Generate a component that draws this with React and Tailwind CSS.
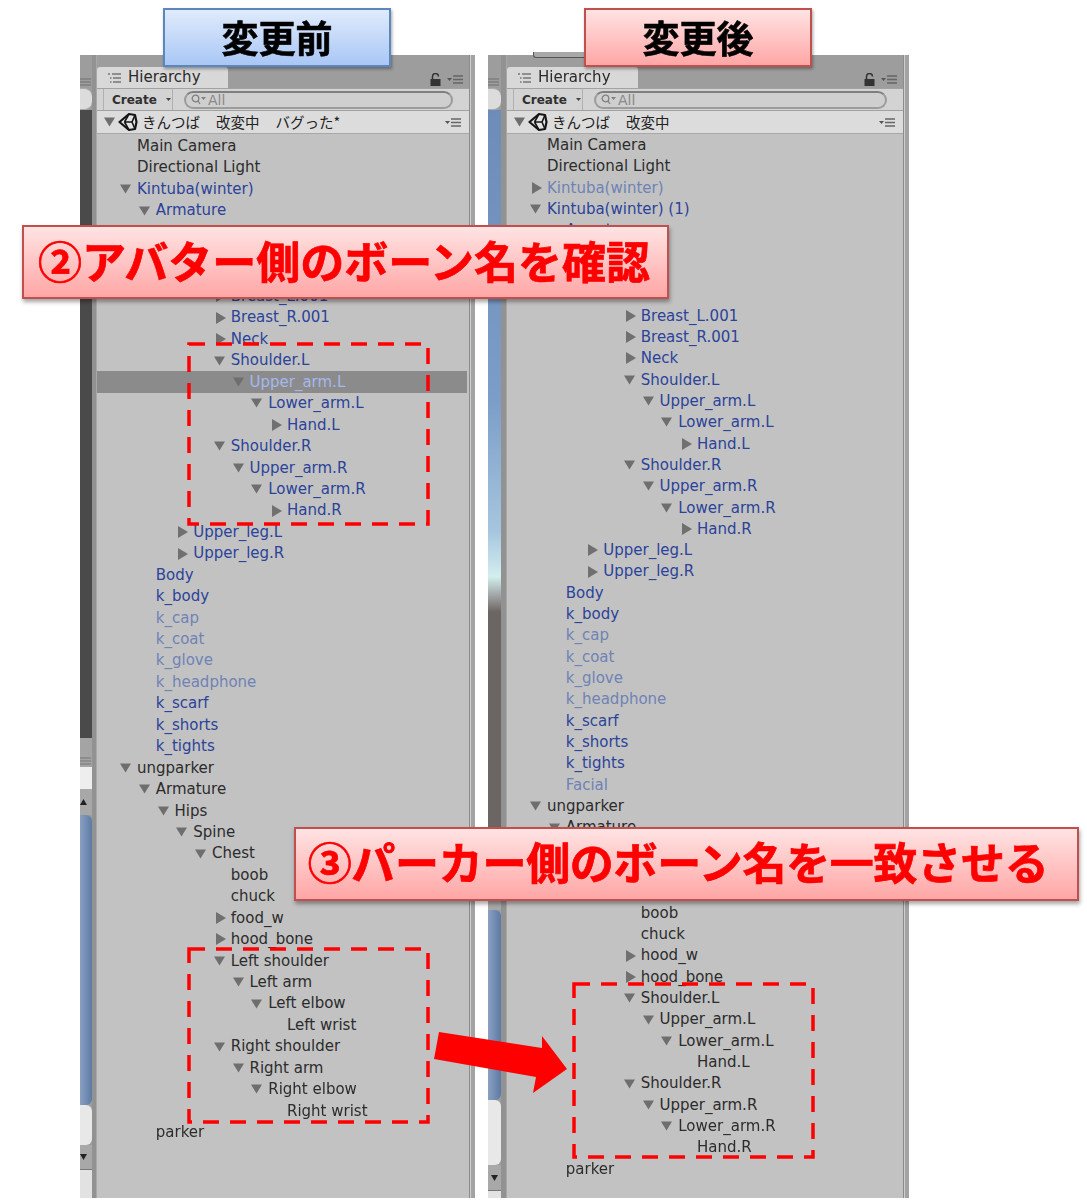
import React from "react";

const shoulders = (names) =>
  names.map((n, i) => {
    const level = 5 + (i % 4);
    return { t: n.t, l: level, a: n.a, c: n.c };
  });

const armsBlue = ["Shoulder.L", "Upper_arm.L", "Lower_arm.L", "Hand.L", "Shoulder.R", "Upper_arm.R", "Lower_arm.R", "Hand.R"];
const leftBones = ["Left shoulder", "Left arm", "Left elbow", "Left wrist", "Right shoulder", "Right arm", "Right elbow", "Right wrist"];

const kintubaBody = [
  { t: "Hips", l: 2, a: "d", c: "b" },
  { t: "Spine", l: 3, a: "d", c: "b" },
  { t: "Chest", l: 4, a: "d", c: "b" },
  { t: "Breast_L.001", l: 5, a: "r", c: "b" },
  { t: "Breast_R.001", l: 5, a: "r", c: "b" },
  { t: "Neck", l: 5, a: "r", c: "b" },
  ...shoulders(armsBlue.map((t, i) => ({ t, a: i % 4 === 3 ? "r" : "d", c: "b" }))),
  { t: "Upper_leg.L", l: 3, a: "r", c: "b" },
  { t: "Upper_leg.R", l: 3, a: "r", c: "b" },
  { t: "Body", l: 1, c: "b" },
  { t: "k_body", l: 1, c: "b" },
  { t: "k_cap", l: 1, c: "l" },
  { t: "k_coat", l: 1, c: "l" },
  { t: "k_glove", l: 1, c: "l" },
  { t: "k_headphone", l: 1, c: "l" },
  { t: "k_scarf", l: 1, c: "b" },
  { t: "k_shorts", l: 1, c: "b" },
  { t: "k_tights", l: 1, c: "b" },
];

const parkerTop = [
  { t: "ungparker", l: 0, a: "d" },
  { t: "Armature", l: 1, a: "d" },
  { t: "Hips", l: 2, a: "d" },
  { t: "Spine", l: 3, a: "d" },
  { t: "Chest", l: 4, a: "d" },
  { t: "boob", l: 5 },
  { t: "chuck", l: 5 },
];

const beforeRows = [
  { t: "Main Camera", l: 0 },
  { t: "Directional Light", l: 0 },
  { t: "Kintuba(winter)", l: 0, a: "d", c: "b" },
  { t: "Armature", l: 1, a: "d", c: "b" },
  ...kintubaBody,
  ...parkerTop,
  { t: "food_w", l: 5, a: "r" },
  { t: "hood_bone", l: 5, a: "r" },
  ...shoulders(leftBones.map((t, i) => ({ t, a: i % 4 === 3 ? undefined : "d" }))),
  { t: "parker", l: 1 },
];

const afterRows = [
  { t: "Main Camera", l: 0 },
  { t: "Directional Light", l: 0 },
  { t: "Kintuba(winter)", l: 0, a: "r", c: "l" },
  { t: "Kintuba(winter) (1)", l: 0, a: "d", c: "b" },
  { t: "Armature", l: 1, a: "d", c: "b" },
  ...kintubaBody,
  { t: "Facial", l: 1, c: "l" },
  ...parkerTop,
  { t: "hood_w", l: 5, a: "r" },
  { t: "hood_bone", l: 5, a: "r" },
  ...shoulders(armsBlue.map((t, i) => ({ t, a: i % 4 === 3 ? undefined : "d" }))),
  { t: "parker", l: 1 },
];

// rows that sit fully behind a banner in the picture
const coveredBefore = [5, 6];
const coveredAfter = [5, 6, 7, 33, 34, 35];

const textColor = { b: "text-[#2b4399]", l: "text-[#6f83b5]" };

const Arrow = ({ dir }) =>
  dir === "d" ? (
    <svg width="11" height="10" viewBox="0 0 12 10" className="ml-[1px] mr-[6px] shrink-0">
      <path d="M0 0H12L6 10Z" fill="#6e6e6e" />
    </svg>
  ) : (
    <svg width="10" height="12" viewBox="0 0 10 12" className="ml-[3px] mr-[5px] shrink-0">
      <path d="M0 0L10 6L0 12Z" fill="#707070" />
    </svg>
  );

const Row = ({ row, rowClass, covered }) => {
  const selected = row.selected;
  return (
    <div
      className={`flex items-center whitespace-nowrap ${rowClass} ${selected ? "bg-[#8b8b8b]" : ""}`}
      style={{ paddingLeft: 22 + row.l * 18.75 }}
    >
      {!covered && (row.a ? <Arrow dir={row.a} /> : <span className="w-[18px] shrink-0" />)}
      {!covered && <span className={selected ? "text-[#a5b8ee]" : textColor[row.c] || "text-[#2c2c2c]"}>{row.t}</span>}
    </div>
  );
};

const MenuIcon = ({ className }) => (
  <svg width="16" height="9" viewBox="0 0 16 9" className={className}>
    <path d="M0 3H5L2.500 6Z" fill="#555" />
    <path d="M6 1H16M6 4.500H16M6 8H16" stroke="#666" strokeWidth="1.300" />
  </svg>
);

const UnityLogo = () => (
  <svg width="20" height="20" viewBox="0 0 20 20" className="-ml-[3px] mr-[4px] shrink-0">
    <path d="M1.500 10L11 2L17 3L18.500 10L17 17L11 18Z" fill="#e4e4e4" stroke="#151515" strokeWidth="2.200" strokeLinejoin="round" />
    <path d="M6.500 10H14M14 10L17 3M14 10L17 17M6.500 10L11 2M6.500 10L11 18" stroke="#151515" strokeWidth="1.600" fill="none" />
  </svg>
);

const Panel = ({ rows, covered, rowClass, listClass, strip, stripClass, gutterClass, scene, widthClass }) => (
  <div className={`flex h-[1143px] bg-[#9d9d9d] ${widthClass}`}>
    <div className={`shrink-0 flex flex-col ${stripClass}`}>{strip}</div>
    <div className={`shrink-0 bg-[#929292] border-r border-[#a8a8a8] ${gutterClass}`} />
    <div className="flex-1 flex flex-col min-w-0 border-r border-[#8c8c8c]">
      <div className="h-[33px] flex items-end justify-between shrink-0">
        <div className="w-[131px] h-[21px] flex items-center pl-[11px] gap-[7px] bg-[#d8d8d8] rounded-t-[3px] text-[#2a2a2a] text-[15px]">
          <svg width="13" height="10" viewBox="0 0 13 10">
            <path d="M0 1H2M4 1H13M2 5H3.500M5 5H13M2 9H3.500M5 9H13" stroke="#444" strokeWidth="1.200" />
          </svg>
          Hierarchy
        </div>
        <div className="flex items-center gap-[6px] pr-[6px] pb-[2px]">
          <svg width="11" height="13" viewBox="0 0 11 13">
            <path d="M2.500 6V3.500A3 3 0 0 1 8.500 3.500" stroke="#333" strokeWidth="1.500" fill="none" />
            <rect x="0.500" y="6" width="10" height="7" fill="#333" />
          </svg>
          <MenuIcon />
        </div>
      </div>
      <div className="h-[23px] shrink-0 flex items-center bg-[#d3d3d3] border-y border-[#a2a2a2] pl-[6px]">
        <div className="h-full w-[70px] shrink-0 flex items-center pl-[8px] gap-[6px] border-x border-[#b0b0b0] font-bold text-[12px] text-[#303030]">
          Create
          <svg width="5" height="3" viewBox="0 0 5 3" className="ml-[3px]">
            <path d="M0 0H5L2.500 3Z" fill="#444" />
          </svg>
        </div>
        <div className="flex-1 h-[18px] ml-[11px] mr-[16px] flex items-center pl-[5px] bg-[#cfcfcf] rounded-full border-2 border-[#9c9c9c] border-t-[#7f7f7f] text-[14px] text-[#8a8a8a] leading-none">
          <svg width="16" height="11" viewBox="0 0 16 11" className="mr-[1px]">
            <circle cx="4.500" cy="4.500" r="3.300" stroke="#808080" strokeWidth="1.300" fill="none" />
            <path d="M7 7L9 10" stroke="#808080" strokeWidth="1.300" />
            <path d="M10 3H15L12.500 6Z" fill="#808080" />
          </svg>
          All
        </div>
      </div>
      <div className="h-[23px] shrink-0 flex items-center bg-[#dcdcdc] border-b border-[#a8a8a8] pl-[6px] pr-[8px] text-[#222]">
        <Arrow dir="d" />
        <UnityLogo />
        <div className="flex gap-[16px] text-[14.5px] font-['Noto_Sans_CJK_JP',sans-serif] whitespace-nowrap">
          {scene.map((s) => (
            <span key={s}>{s}</span>
          ))}
        </div>
        <MenuIcon className="ml-auto" />
      </div>
      <div className={`flex-1 bg-[#c2c2c2] pr-[2px] text-[15px] ${listClass}`}>
        {rows.map((r, i) => (
          <Row key={i} row={r} rowClass={rowClass} covered={covered.includes(i)} />
        ))}
      </div>
    </div>
    <div className="w-[5px] shrink-0 bg-[#a3a3a3] border-l border-[#cfcfcf]" />
  </div>
);

const StripMenu = () => (
  <div className="h-[33px] shrink-0 flex items-end pb-[2px]">
    <svg width="11" height="8" viewBox="0 0 11 8">
      <path d="M0 1H11M0 4H11M0 7H11" stroke="#707070" strokeWidth="1.200" />
    </svg>
  </div>
);

const LeftStrip = () => (
  <>
    <StripMenu />
    <div className="h-[22px] shrink-0 bg-[#dcdcdc] rounded-r-[8px] border-y border-[#aaa]" />
    <div className="h-[628px] shrink-0 bg-[#4a4a4a]" />
    <div className="h-[29px] shrink-0 bg-[#a4a4a4] flex items-end pb-[2px]">
      <svg width="11" height="8" viewBox="0 0 11 8">
        <path d="M0 1H11M0 4H11M0 7H11" stroke="#777" strokeWidth="1.200" />
      </svg>
    </div>
    <div className="h-[22px] shrink-0 bg-[#eeeeee]" />
    <div className="h-[26px] shrink-0 bg-[#a8a8a8] flex items-center">
      <svg width="7" height="6" viewBox="0 0 7 6">
        <path d="M0 6H7L3.500 0Z" fill="#222" />
      </svg>
    </div>
    <div className="h-[290px] shrink-0 rounded-r-[6px] bg-gradient-to-r from-[#8aa0c2] to-[#5d7aa3]" />
    <div className="h-[40px] shrink-0 rounded-r-[6px] bg-[#e8e8e8]" />
    <div className="h-[24px] shrink-0 bg-[#a8a8a8] flex items-center">
      <svg width="7" height="6" viewBox="0 0 7 6">
        <path d="M0 0H7L3.500 6Z" fill="#222" />
      </svg>
    </div>
    <div className="flex-1 bg-[#e2e2e2] border-t border-[#777]" />
  </>
);

const RightStrip = () => (
  <>
    <StripMenu />
    <div className="h-[22px] shrink-0 bg-[#dcdcdc] rounded-r-[8px] border-y border-[#aaa]" />
    <div className="h-[502px] shrink-0 bg-[linear-gradient(to_bottom,#6d8cb8_0%,#7c9dc8_58%,#a6c6df_84%,#d3eeee_93%,#8d8c8a_98%,#6b6563_100%)]" />
    <div className="h-[220px] shrink-0 bg-[#6b6563]" />
    <div className="h-[78px] shrink-0 bg-[#a8a8a8]" />
    <div className="h-[190px] shrink-0 rounded-r-[6px] bg-gradient-to-r from-[#8aa0c2] to-[#5d7aa3]" />
    <div className="h-[65px] shrink-0 rounded-r-[6px] bg-[#e8e8e8]" />
    <div className="h-[25px] shrink-0 bg-[#a8a8a8] flex items-center">
      <svg width="7" height="6" viewBox="0 0 7 6" className="ml-[3px]">
        <path d="M0 0H7L3.500 6Z" fill="#222" />
      </svg>
    </div>
    <div className="flex-1 bg-[#e2e2e2] border-t border-[#777]" />
  </>
);

const DashBox = ({ className, w, h }) => (
  <svg width={w} height={h} viewBox={`0 0 ${w} ${h}`} className={`absolute ${className}`}>
    <rect x="2" y="2" width={w - 4} height={h - 4} fill="none" stroke="#fe0000" strokeWidth="3.500" strokeDasharray="16 11" />
  </svg>
);

const jp = "font-['Noto_Sans_CJK_JP',sans-serif] font-bold";

const App = () => {
  const before = beforeRows.map((r, i) => (i === 11 ? { ...r, selected: true } : r));

  return (
    <div className="relative w-[1087px] h-[1200px] bg-white overflow-hidden font-['DejaVu_Sans',sans-serif]">
      <div className="flex gap-[13px] pl-[80px] pt-[55px] blur-[0.4px]">
        <Panel
          rows={before}
          covered={coveredBefore}
          rowClass="h-[21.45px]"
          listClass="pt-[1.5px]"
          strip={<LeftStrip />}
          stripClass="w-[12px]"
          gutterClass="w-[5px]"
          scene={["きんつば", "改変中", "バグった*"]}
          widthClass="w-[395px]"
        />
        <Panel
          rows={afterRows}
          covered={coveredAfter}
          rowClass="h-[21.33px]"
          listClass="pt-[0.5px]"
          strip={<RightStrip />}
          stripClass="w-[13px]"
          gutterClass="w-[6px]"
          scene={["きんつば", "改変中"]}
          widthClass="w-[421px]"
        />
      </div>

      {/* bit of the window tab peeking out above the right panel */}
      <div className="absolute left-[533px] top-[52px] w-[52px] h-[6px] bg-[#a8a8a8] border-b border-l border-[#555] rounded-bl-[3px]" />

      <div className={`absolute left-[163px] top-[8px] w-[228px] h-[59px] flex items-center justify-center border-2 border-[#5b87bd] bg-gradient-to-b from-[#e0ebfc] to-[#a9c7f5] shadow-[1px_2px_3px_rgba(0,0,0,0.35)] text-[37px] text-black [-webkit-text-stroke:0.6px_#000] ${jp}`}>
        変更前
      </div>
      <div className={`absolute left-[584px] top-[8px] w-[228px] h-[59px] flex items-center justify-center border-2 border-[#c0504d] bg-gradient-to-b from-[#ffe3e3] to-[#ffa6a6] shadow-[1px_2px_3px_rgba(0,0,0,0.35)] text-[37px] text-black [-webkit-text-stroke:0.6px_#000] ${jp}`}>
        変更後
      </div>
      <div className={`absolute left-[22px] top-[225px] w-[647px] h-[74px] flex items-center justify-center pb-[5px] pr-[3px] border-2 border-[#c0504d] bg-gradient-to-b from-[#ffe3e3] to-[#ffa6a6] shadow-[1px_3px_4px_rgba(0,0,0,0.35)] text-[44px] text-[#fe0000] whitespace-nowrap [-webkit-text-stroke:0.7px_#fe0000] ${jp}`}>
        ②アバター側のボーン名を確認
      </div>
      <div className={`absolute left-[294px] top-[827px] w-[785px] h-[74px] flex items-center justify-center pb-[6px] pr-[17px] border-2 border-[#c0504d] bg-gradient-to-b from-[#ffe3e3] to-[#ffa6a6] shadow-[1px_3px_4px_rgba(0,0,0,0.35)] text-[44px] tracking-[-0.3px] text-[#fe0000] whitespace-nowrap [-webkit-text-stroke:0.7px_#fe0000] ${jp}`}>
        ③パーカー側のボーン名を一致させる
      </div>

      <DashBox className="left-[187px] top-[342px]" w={243} h={184} />
      <DashBox className="left-[187px] top-[947px]" w={243} h={177} />
      <DashBox className="left-[572px] top-[982px]" w={243} h={177} />

      <svg width="140" height="70" viewBox="0 0 140 70" className="absolute left-[431px] top-[1028px]">
        <path d="M8 4L111 20L111 8L136 41L102 65L105 49L3 31Z" fill="#fe0000" />
      </svg>
    </div>
  );
};

export default App;
